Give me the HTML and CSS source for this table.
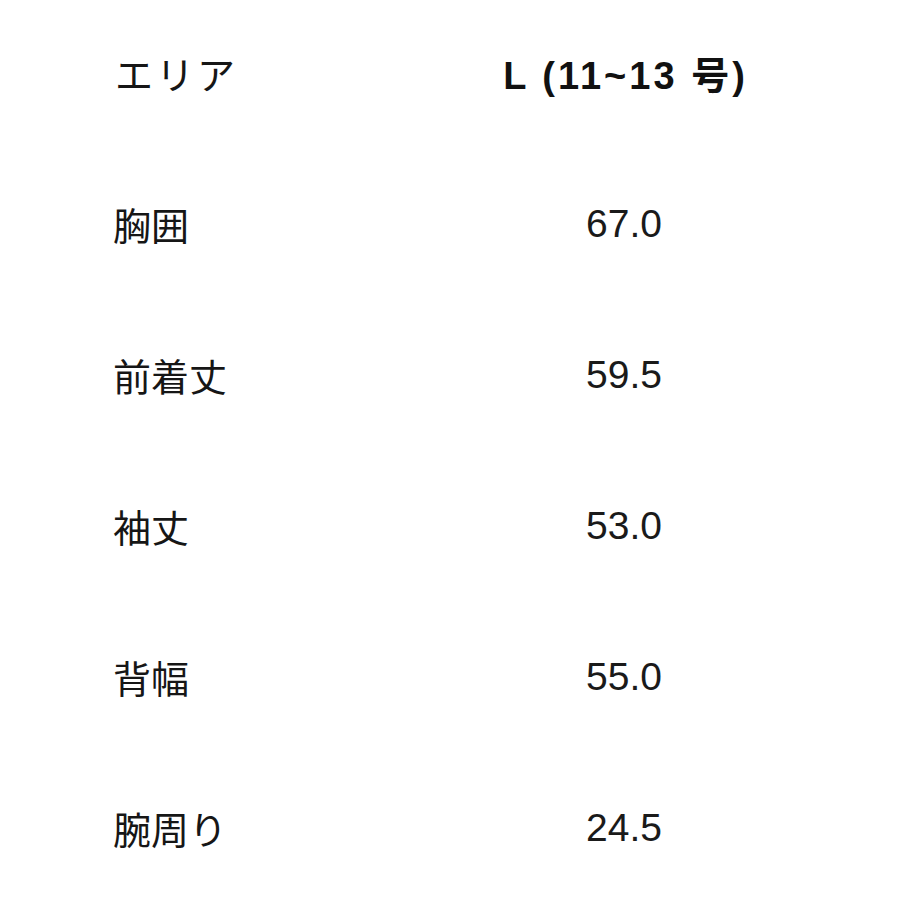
FILE: index.html
```html
<!DOCTYPE html>
<html lang="ja">
<head>
<meta charset="utf-8">
<link rel="stylesheet" href="styles.css">
</head>
<body>
<div class="table">
  <div class="row head">
    <div class="label">エリア</div>
    <div class="value">L (11~13 号)</div>
  </div>
  <div class="row">
    <div class="label">胸囲</div>
    <div class="value">67.0</div>
  </div>
  <div class="row">
    <div class="label">前着丈</div>
    <div class="value">59.5</div>
  </div>
  <div class="row">
    <div class="label">袖丈</div>
    <div class="value">53.0</div>
  </div>
  <div class="row">
    <div class="label">背幅</div>
    <div class="value">55.0</div>
  </div>
  <div class="row">
    <div class="label">腕周り</div>
    <div class="value">24.5</div>
  </div>
</div>
</body>
</html>
```
FILE: styles.css
```css
html, body {
  margin: 0;
  padding: 0;
  background: #ffffff;
}
body {
  width: 900px;
  height: 900px;
  overflow: hidden;
  color: #111111;
  font-family: "Liberation Sans", "Noto Sans CJK JP", sans-serif;
}
.table {
  display: flex;
  flex-direction: column;
  padding-left: 113px;
  margin-top: -3px;
}
.row {
  display: grid;
  grid-template-columns: 387px 248px;
  height: 151px;
  align-items: center;
}
.label {
  font-family: "Noto Sans CJK JP", sans-serif;
  font-size: 38px;
  font-weight: 400;
  color: #161616;
}
.value {
  text-align: center;
  font-size: 39px;
  font-weight: 400;
  color: #1a1a1a;
}
.head .label {
  letter-spacing: 3px;
  padding-left: 2px;
}
.head .value {
  font-weight: 700;
  font-size: 38px;
  letter-spacing: 3px;
  padding-left: 3px;
  color: #111111;
}
```
